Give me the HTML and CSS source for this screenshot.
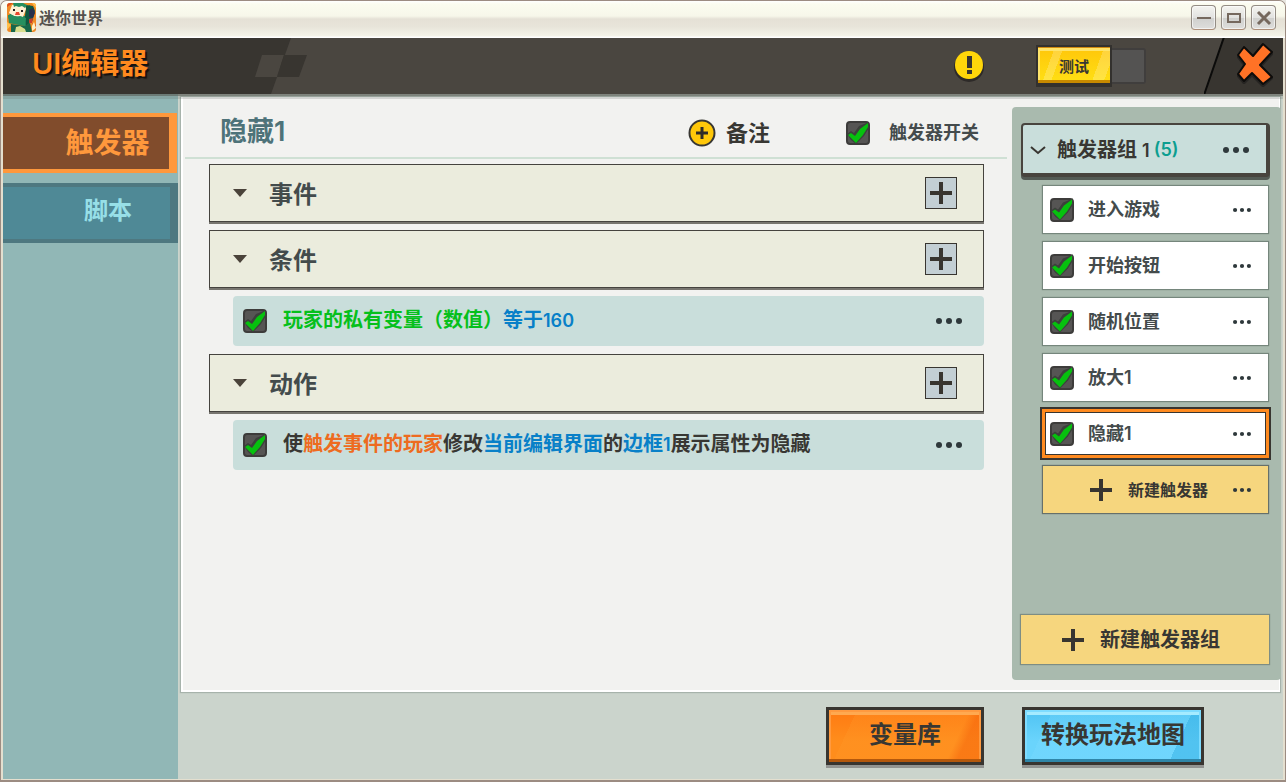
FILE: index.html
```html
<!DOCTYPE html>
<html lang="zh-CN">
<head>
<meta charset="utf-8">
<title>迷你世界</title>
<link rel="stylesheet" href="styles.css">
</head>
<body>
<svg class="defs" aria-hidden="true">
  <symbol id="dots" viewBox="0 0 26 8"><circle cx="3" cy="4" r="3"/><circle cx="13" cy="4" r="3"/><circle cx="23" cy="4" r="3"/></symbol>
  <symbol id="plus" viewBox="0 0 22 22"><path d="M9 0h4v9h9v4h-9v9H9v-9H0V9h9z"/></symbol>
  <symbol id="caret" viewBox="0 0 14 8"><path d="M0 0h14L7 8z"/></symbol>
</svg>
<div class="window">
  <div class="titlebar">
    <svg class="app-icon" viewBox="0 0 29 29">
      <defs><clipPath id="round"><rect width="29" height="29" rx="3"/></clipPath></defs>
      <g clip-path="url(#round)">
        <path fill="#f08a24" d="M0 0h29v29H0z"/>
        <path fill="#ffc04a" d="M25 0h4v5zM0 19l4 3-4 5z"/>
        <path fill="#d94e1c" d="M0 0h6L0 4zM25 20l4 2v5z"/>
        <path fill="#1f8457" d="M1 13l3-3 14 3 4-11 5 3-1 12-7 6L3 20z"/>
        <path fill="#0f5840" d="M19 2l7 1 2 5-3 10-6 5-1-9z"/>
        <path fill="#fff0d2" d="M5 2l13-1 1 5-3 8-9-1-5-3z"/>
        <path fill="#268f5f" d="M6 0l10 0 4 2-2 3-3-2-3 1-3-1-2 1zM1 12l4 0 2 1 3 1 3-1 6 2-1 8-16-3z"/>
        <path fill="#222" d="M6 6h2v2H6zM14 7h2v2h-2z"/>
        <path fill="#e8472c" d="M9 9h3l1 3H8z"/>
        <path fill="#27304c" d="M22 7l4-2 2 5-2 5-4-1z"/>
        <path fill="#c8402c" d="M22 16l4-1-1 5h-3z"/>
        <path fill="#17674a" d="M4 21l14 2 5-3 2 9H4z"/>
        <path fill="#d9df8e" d="M9 24l4-1 5 3 1 3H8z"/>
        <path fill="#fff0c0" d="M25 23l2-4 2 6-4 3z"/>
      </g>
    </svg>
    <h1 class="app-name">迷你世界</h1>
    <div class="window-controls">
      <button class="win-btn" aria-label="最小化"><svg viewBox="0 0 16 16"><path d="M1 8h14"/></svg></button>
      <button class="win-btn" aria-label="最大化"><svg viewBox="0 0 16 16"><path d="M2 4h12v8H2z"/></svg></button>
      <button class="win-btn" aria-label="关闭"><svg viewBox="0 0 16 16"><path class="thick" d="M2 2l12 12M14 2L2 14"/></svg></button>
    </div>
  </div>

  <header class="header">
    <svg class="header-pattern" viewBox="0 0 310 56" aria-hidden="true">
      <path fill="#383530" d="M0 0h288l-20 56H0z"/>
      <path fill="#4a4640" d="M259 17h22l-7 22h-22z"/>
      <path fill="#383530" d="M281 17h23l-8 22h-22z"/>
    </svg>
    <h2 class="header-title">UI编辑器</h2>
    <div class="header-actions">
      <button class="warn" aria-label="提示"><svg viewBox="0 0 32 32"><circle cx="16" cy="17" r="15" fill="#2d2a28"/><circle cx="16" cy="15" r="14" fill="#ffd60a"/><path fill="#383530" d="M14 6h5v12h-5zM14 20h5v4h-5z"/></svg></button>
      <div class="test"><button class="test-btn">测试</button><span class="test-slot"></span></div>
    </div>
    <button class="close" aria-label="退出">
      <svg viewBox="0 0 79 56">
        <path fill="#383530" d="M20 0h59v56H0z"/>
        <path fill="none" stroke="#0b0b0a" stroke-width="2" d="M20-1L0 57"/>
        <path fill="#262422" stroke="#262422" stroke-width="4" stroke-linejoin="round" d="M40 12l-5 7 7 9-7 10 5 6 8-8 11 11 8-7-11-12 11-12-8-8-10 12z"/>
        <path fill="#ff7226" stroke="#0d0c0b" stroke-width="2" stroke-linejoin="round" d="M40 9l-6 8 7 9-7 10 6 7 8-8 11 11 9-7-12-12 12-13-9-8-10 12z"/>
      </svg>
    </button>
  </header>

  <div class="body">
    <nav class="nav">
      <button class="nav-item active">触发器</button>
      <button class="nav-item second">脚本</button>
    </nav>
    <main class="main">
      <div class="board">
        <section class="editor">
          <div class="editor-head">
            <h3 class="editor-title">隐藏1</h3>
            <button class="note"><svg viewBox="0 0 28 28"><circle cx="14" cy="14" r="12.5" fill="#ffc80a" stroke="#383733" stroke-width="2"/><path fill="#2e2b28" d="M12.500 8h3v4.500h4.500v3h-4.500v4.500h-3v-4.500H8v-3h4.500z"/></svg>备注</button>
            <label class="switch"><input class="check" type="checkbox" checked>触发器开关</label>
          </div>
          <div class="blocks">
            <div class="block"><button class="fold" aria-label="折叠"><svg><use href="#caret"/></svg></button><h4>事件</h4><button class="add" aria-label="添加事件"><svg><use href="#plus"/></svg></button></div>
            <div class="block"><button class="fold" aria-label="折叠"><svg><use href="#caret"/></svg></button><h4>条件</h4><button class="add" aria-label="添加条件"><svg><use href="#plus"/></svg></button></div>
            <div class="rule"><input class="check" type="checkbox" id="r1" checked><label for="r1"><span class="green">玩家的私有变量（数值）</span><span class="blue">等于<span class="num">160</span></span></label><button class="more" aria-label="更多"><svg><use href="#dots"/></svg></button></div>
            <div class="block"><button class="fold" aria-label="折叠"><svg><use href="#caret"/></svg></button><h4>动作</h4><button class="add" aria-label="添加动作"><svg><use href="#plus"/></svg></button></div>
            <div class="rule"><input class="check" type="checkbox" id="r2" checked><label for="r2">使<span class="orange">触发事件的玩家</span>修改<span class="blue">当前编辑界面</span>的<span class="blue">边框<span class="num">1</span></span>展示属性为隐藏</label><button class="more" aria-label="更多"><svg><use href="#dots"/></svg></button></div>
          </div>
        </section>
        <aside class="side">
          <div class="group">
            <button class="expand" aria-label="展开"><svg viewBox="0 0 16 10"><path d="M1 2l7 6 7-6"/></svg></button>
            <span class="group-name">触发器组 <span class="num">1</span></span><span class="count">(5)</span>
            <button class="more" aria-label="更多"><svg><use href="#dots"/></svg></button>
          </div>
          <ul class="list">
            <li class="item"><input class="check" type="checkbox" id="t1" checked><label for="t1">进入游戏</label><button class="more small" aria-label="更多"><svg><use href="#dots"/></svg></button></li>
            <li class="item"><input class="check" type="checkbox" id="t2" checked><label for="t2">开始按钮</label><button class="more small" aria-label="更多"><svg><use href="#dots"/></svg></button></li>
            <li class="item"><input class="check" type="checkbox" id="t3" checked><label for="t3">随机位置</label><button class="more small" aria-label="更多"><svg><use href="#dots"/></svg></button></li>
            <li class="item"><input class="check" type="checkbox" id="t4" checked><label for="t4">放大1</label><button class="more small" aria-label="更多"><svg><use href="#dots"/></svg></button></li>
            <li class="item selected"><input class="check" type="checkbox" id="t5" checked><label for="t5">隐藏1</label><button class="more small" aria-label="更多"><svg><use href="#dots"/></svg></button></li>
            <li class="item create"><button class="create-btn"><svg><use href="#plus"/></svg>新建触发器</button><button class="more small" aria-label="更多"><svg><use href="#dots"/></svg></button></li>
          </ul>
          <button class="create-group"><svg><use href="#plus"/></svg>新建触发器组</button>
        </aside>
      </div>
      <footer class="footer">
        <button class="big orange-btn">变量库</button>
        <button class="big blue-btn">转换玩法地图</button>
      </footer>
    </main>
  </div>
</div>
</body>
</html>
```

FILE: styles.css
```css
* { box-sizing: border-box; }

body {
  margin: 0;
  background: #e8e6e0;
  color: #383733;
  font-family: Inter, "Noto Sans CJK SC", sans-serif;
  font-weight: 600;
}

h1, h2, h3, h4, ul { margin: 0; padding: 0; font-weight: inherit; }
ul { list-style: none; }

button {
  flex: none;
  border: 0;
  padding: 0;
  background: none;
  color: inherit;
  font: inherit;
  white-space: nowrap;
  cursor: pointer;
}

svg { display: block; flex: none; }
.defs { position: absolute; width: 0; height: 0; }

.window {
  display: flex;
  flex-direction: column;
  min-height: 100vh;
  padding: 0 2px 1px;
  border: 1px solid #9c8c82;
  border-bottom-width: 2px;
  border-radius: 7px 7px 0 0;
  background: #e4dfcf;
}

/* Title bar */
.titlebar {
  display: flex;
  align-items: center;
  gap: 3px;
  height: 37px;
  margin: 0 -2px;
  padding: 0 9px 4px 6px;
  border-radius: 6px 6px 0 0;
  background: linear-gradient(#fff 0, #fbfcef 3px, #f7f7ea 15px, #e5e1d6 18px, #e8e5da 26px, #f4f3e8 35px, #fff 36px);
}
.app-icon { width: 29px; height: 29px; }
.app-name { font-size: 16px; line-height: 24px; color: #55524e; }
.window-controls { display: flex; gap: 5px; margin-left: auto; }
.win-btn {
  display: grid;
  place-items: center;
  width: 25px;
  height: 25px;
  border: 1px solid #938c84;
  border-bottom-color: #ad8d77;
  border-radius: 4px;
  background: linear-gradient(#f4f4f0, #e2e2e0 50%, #cfcfcd 52%, #dededc);
  box-shadow: inset 0 0 0 1px #fff9;
}
.win-btn svg { width: 16px; height: 16px; fill: none; stroke: #75685e; stroke-width: 2; }
.win-btn .thick { stroke-width: 3; }

/* Header */
.header {
  position: relative;
  z-index: 1;
  display: flex;
  align-items: center;
  height: 56px;
  background: #4a4640;
  box-shadow: 0 2px 0 #5b5f5899, 0 5px 0 #5b5f5833;
}
.header-pattern { position: absolute; left: 0; top: 0; width: 310px; height: 56px; }
.header-title {
  position: relative;
  padding: 0 0 4px 29px;
  color: #ff8a1f;
  font-size: 29px;
  line-height: 40px;
  text-shadow: 2px 2px 1px #15120f;
}
.header-actions { display: flex; align-items: center; gap: 51px; margin-left: auto; padding-right: 58px; }
.warn svg { width: 32px; height: 32px; }
.test { display: flex; align-items: center; }
.test-btn {
  width: 76px;
  height: 42px;
  border: 2px solid #33312e;
  border-bottom-width: 4px;
  background: linear-gradient(110deg, #fff0 20%, #fff3 20% 30%, #fff0 30% 78%, #fff3 78% 92%, #fff0 92%), linear-gradient(#ffc60a, #ffe014);
  box-shadow: inset 0 1px 0 #d08a10, inset 0 -3px 0 #c88a00, inset 0 4px 0 #ffe46a, inset 2px 0 0 #ffe46a;
  font-size: 15px;
}
.test-slot {
  width: 34px;
  height: 36px;
  border: 2px solid #403e3d;
  border-left: 0;
  border-radius: 0 3px 3px 0;
  background: #545352;
}
.close svg { width: 79px; height: 56px; }

/* Body */
.body { display: grid; flex: 1; grid-template-columns: 175px 1fr; }
.nav { display: flex; flex-direction: column; gap: 10px; padding-top: 19px; background: #91b7b6; }
.nav-item {
  height: 60px;
  margin-right: 1px;
  padding-left: 43px;
  border: solid #ff983c;
  border-width: 4px 8px 4px 0;
  background: #814c2c;
  color: #ff983c;
  font-size: 28px;
  line-height: 40px;
}
.nav-item.second {
  margin-right: 0;
  padding-bottom: 4px;
  border-color: #4e7880;
  background: #4f8996;
  color: #97dfe7;
  font-size: 24px;
}
.main { display: flex; flex-direction: column; padding: 3px 3px 0; background: #cbd4cc; }
.board {
  display: grid;
  flex: 1;
  grid-template-columns: 1fr 267px;
  border: solid #fff;
  border-width: 0 1px 2px 2px;
  background: #f2f2f0;
  box-shadow: 0 0 1px 1px #8f9d9499;
}

/* Editor */
.editor { padding: 0 5px 0 2px; }
.editor-head {
  display: flex;
  align-items: center;
  height: 62px;
  padding: 12px 28px 0 35px;
  border-bottom: 2px solid #cfe0d4;
}
.editor-title { color: #4e7379; font-size: 27px; line-height: 36px; padding-bottom: 2px; }
.note { display: flex; align-items: center; gap: 10px; margin-left: auto; font-size: 22px; line-height: 28px; }
.note svg { width: 28px; height: 28px; }
.switch { display: flex; align-items: center; gap: 19px; margin-left: 76px; color: #444b4c; font-size: 18px; line-height: 26px; }

.check {
  position: relative;
  flex: none;
  appearance: none;
  width: 24px;
  height: 24px;
  margin: 0;
  border: 2px solid #3d3c3b;
  border-radius: 4px;
  background: #565554;
}
.check::before, .check::after { position: absolute; inset: -2px; content: none; }
.check:checked::before {
  content: "";
  background: #3c403c;
  clip-path: polygon(1px 13px, 5px 10px, 8px 12px, 13px 5px, 23px 1px, 23px 7px, 18px 15px, 10px 23px, 5px 19px);
}
.check:checked::after {
  content: "";
  background: #06c10e;
  clip-path: polygon(2px 14px, 5px 12px, 9px 15px, 14px 8px, 22px 2px, 22px 6px, 17px 14px, 10px 22px, 6px 18px);
}

.blocks { padding: 5px 23px 0 24px; }
.block {
  display: flex;
  align-items: center;
  height: 58px;
  margin-bottom: 8px;
  padding: 0 26px 0 23px;
  border: 1px solid #45433e;
  background: #ebecdd;
  box-shadow: 0 2px 0 #77756f;
  color: #434b4c;
}
.block h4 { padding-top: 4px; font-size: 24px; line-height: 32px; }
.fold svg { width: 14px; height: 8px; margin-right: 22px; fill: #4a433a; }
.add {
  display: grid;
  place-items: center;
  width: 32px;
  height: 32px;
  margin-left: auto;
  border: 1px solid #383530;
  background: #c3cfd4;
}
.add svg, .create-btn svg, .create-group svg { width: 22px; height: 22px; fill: #383530; }
.rule {
  display: flex;
  align-items: center;
  height: 50px;
  margin: 0 0 8px 24px;
  padding: 0 22px 0 10px;
  border-radius: 4px;
  background: #c9dedb;
}
.rule label { padding: 0 0 2px 16px; font-size: 20px; line-height: 28px; }
.num { font-size: 18px; }
.green { color: #06c01c; }
.blue { color: #0880c8; }
.orange { color: #ee6b20; }
.more { margin-left: auto; }
.more svg { width: 26px; height: 8px; fill: #2e383b; }
.more.small svg { width: 18px; height: 6px; }

/* Trigger list */
.side {
  display: flex;
  flex-direction: column;
  margin: 10px -2px 10px 0;
  padding: 16px 11px 16px 9px;
  border-radius: 4px;
  background: #a9baae;
}
.group {
  display: flex;
  align-items: center;
  height: 54px;
  padding: 2px 17px 0 7px;
  border: 2px solid #48443e;
  border-width: 2px 4px 4px 2px;
  border-radius: 4px;
  background: #c9dedb;
  box-shadow: 0 3px 0 #545b55;
}
.expand svg { width: 16px; height: 10px; fill: none; stroke: #383530; stroke-width: 2; }
.group-name { padding-left: 11px; font-size: 20px; line-height: 28px; }
.count { padding-left: 4px; color: #0d9e90; font-size: 18px; line-height: 28px; }
.list { padding: 9px 2px 0 22px; }
.item {
  display: flex;
  align-items: center;
  height: 47px;
  margin-bottom: 9px;
  padding: 0 17px 0 7px;
  background: #fff;
  box-shadow: 0 0 1px 1px #75867c;
}
.item label { padding-left: 14px; color: #444b4c; font-size: 18px; line-height: 26px; }
.item.selected { outline: 1px solid #383530; outline-offset: -3px; box-shadow: inset 0 0 0 2px #ff8a1f, 0 0 0 1px #ff8a1f, 0 0 0 3px #383530; }
.item.create { background: #f6d67e; box-shadow: 0 0 1px 1px #66706a; }
.create-btn { display: flex; align-items: center; gap: 16px; padding-left: 40px; font-size: 16px; line-height: 22px; }
.create-group {
  display: flex;
  align-items: center;
  justify-content: center;
  gap: 16px;
  height: 49px;
  margin: auto 1px 0 0;
  padding-right: 8px;
  background: #f6d67e;
  box-shadow: 0 0 1px 1px #7d8d84;
  font-size: 20px;
  line-height: 28px;
}

/* Footer */
.footer { display: flex; justify-content: flex-end; gap: 38px; padding: 15px 76px 14px 0; }
.big {
  height: 58px;
  padding-bottom: 2px;
  border: 3px solid #383530;
  font-size: 24px;
  line-height: 32px;
}
.orange-btn {
  width: 158px;
  background: linear-gradient(115deg, #fff0 16%, #ff9a2a44 16% 80%, #f5690f88 86%), linear-gradient(#ff7a12, #ff8d1c 60%);
  box-shadow: 0 3px 0 #929491, inset 0 -3px 0 #b4580c, inset 0 0 0 2px #ff9a40, inset 0 5px 0 #ffa950;
}
.blue-btn {
  width: 182px;
  background: linear-gradient(115deg, #fff0 14%, #7fdcff44 14% 84%, #3bb4e688 84%), linear-gradient(#4fc3f2, #6ad4fc 60%);
  box-shadow: 0 3px 0 #929491, inset 0 -3px 0 #2f86a8, inset 0 0 0 2px #7edcff, inset 0 5px 0 #a5ebff;
}
```
